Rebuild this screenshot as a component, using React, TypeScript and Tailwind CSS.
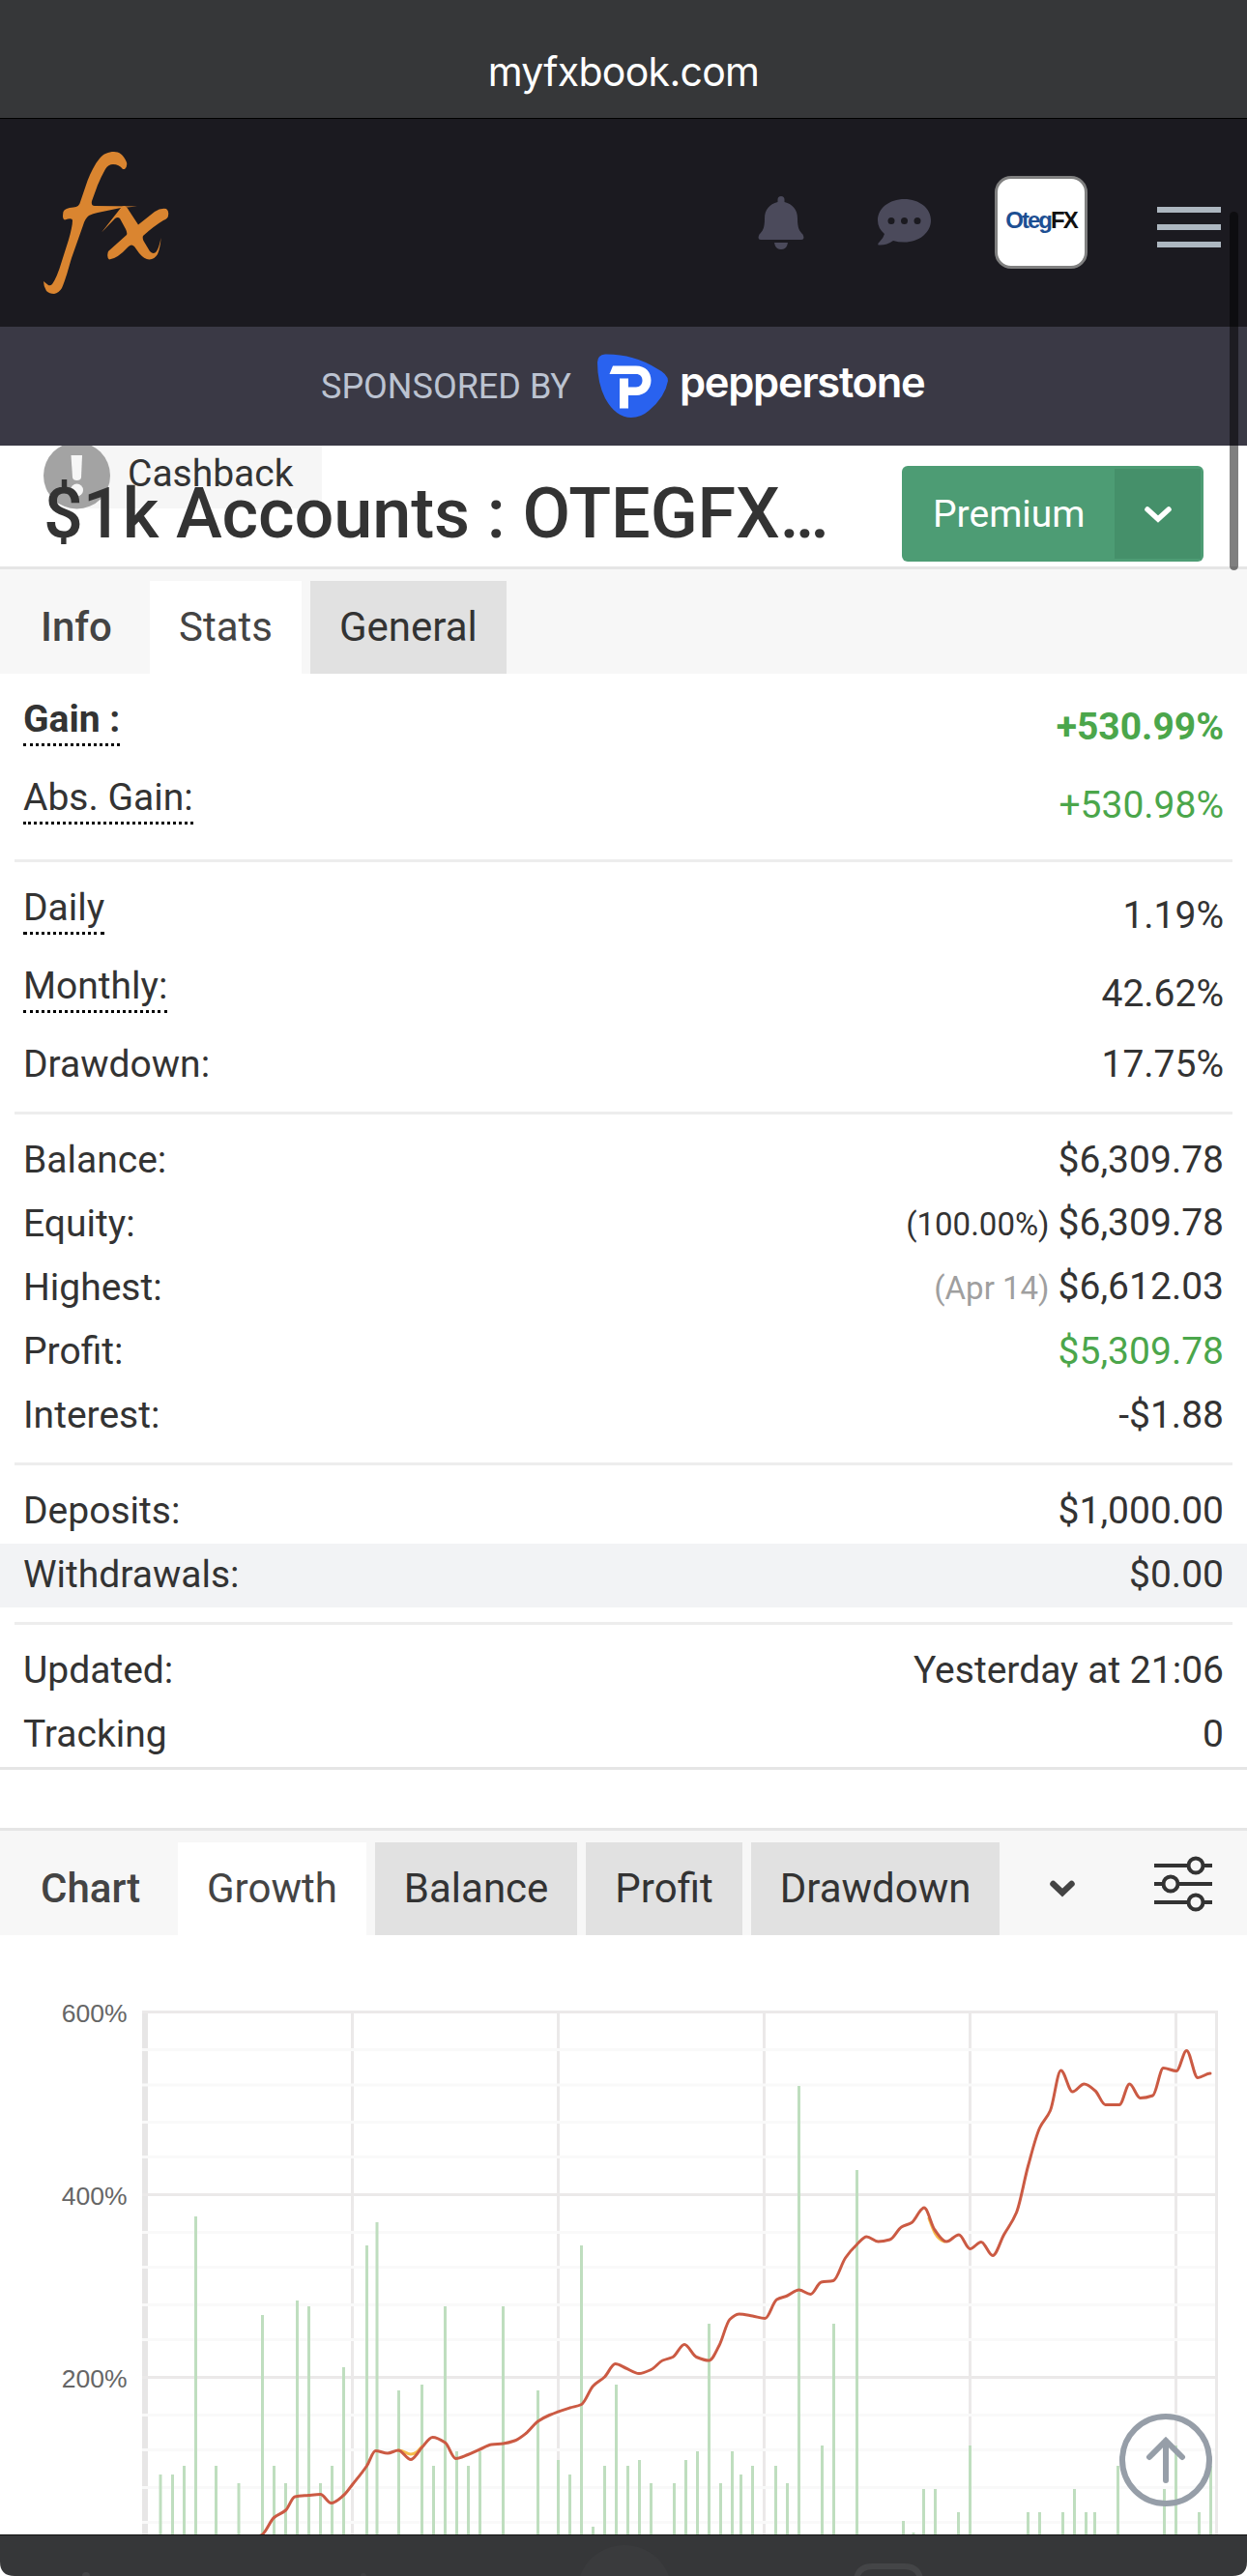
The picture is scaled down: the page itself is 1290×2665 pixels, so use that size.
import type { ReactNode } from 'react'

type Row = {
  label: string
  value: string
  note?: string
  noteClass?: string
  valueClass?: string
  bold?: boolean
  dotted?: boolean
  highlighted?: boolean
}

const STAT_GROUPS: Row[][] = [
  [
    { label: 'Gain :', value: '+530.99%', valueClass: 'text-[#4ba64b]', bold: true, dotted: true },
    { label: 'Abs. Gain:', value: '+530.98%', valueClass: 'text-[#4ba64b]', dotted: true }
  ],
  [
    { label: 'Daily', value: '1.19%', dotted: true },
    { label: 'Monthly:', value: '42.62%', dotted: true },
    { label: 'Drawdown:', value: '17.75%' }
  ],
  [
    { label: 'Balance:', value: '$6,309.78' },
    { label: 'Equity:', value: '$6,309.78', note: '(100.00%)' },
    { label: 'Highest:', value: '$6,612.03', note: '(Apr 14)', noteClass: 'text-[#9f9f9f]' },
    { label: 'Profit:', value: '$5,309.78', valueClass: 'text-[#4ba64b]' },
    { label: 'Interest:', value: '-$1.88' }
  ],
  [
    { label: 'Deposits:', value: '$1,000.00' },
    { label: 'Withdrawals:', value: '$0.00', highlighted: true }
  ],
  [
    { label: 'Updated:', value: 'Yesterday at 21:06' },
    { label: 'Tracking', value: '0' }
  ]
]

// [x, top] of every daily bar
const BARS = [
  [166, 520], [178.5, 520], [190.5, 511], [202.5, 253], [223.5, 511], [247, 529], [271.5, 355],
  [283.5, 511], [295.5, 529], [307.5, 340], [319.5, 346], [331.5, 529], [343.5, 511], [355.5, 409],
  [379.5, 283], [390, 259], [412.5, 433], [436.5, 427], [448.5, 511], [460.5, 346], [472.5, 496],
  [484.5, 511], [496.5, 496], [520.5, 346], [556.5, 433], [577.5, 505], [589.5, 520], [601.5, 283],
  [613.5, 574], [625.5, 511], [637.5, 427], [649.5, 511], [661.5, 505], [673.5, 529], [697.5, 529],
  [709.5, 505], [721.5, 496], [733.5, 364], [745.5, 529], [757.5, 496], [766.5, 520], [778.5, 511],
  [802.5, 511], [814.5, 529], [826.5, 118], [850.5, 490], [862.5, 364], [886.5, 205], [934.5, 568],
  [945, 580], [955.5, 535], [967.5, 535], [991.5, 559], [1003.5, 490], [1063.5, 559],
  [1075.5, 559], [1099.5, 559], [1111.5, 535], [1123.5, 559], [1132.5, 559], [1156.5, 511],
  [1204.5, 535], [1216.5, 490], [1240.5, 559], [1252.5, 511]
]

const GROWTH = [
  [269.5, 583], [283.5, 564.5], [295.5, 557], [305, 543], [319, 541.5], [331.5, 540.5],
  [342.5, 549.5], [356, 541], [364.5, 530.5], [379.5, 511], [388.5, 495.5], [401, 498],
  [412, 495], [425, 504.5], [436.5, 492], [447.5, 481.5], [460.5, 487], [471.5, 503.5],
  [484, 499.5], [496.5, 494], [508.5, 489], [520.5, 488], [532.5, 485], [544, 477.5],
  [556.5, 465], [568.5, 458.5], [589.5, 451], [601.5, 447.5], [613.5, 428.5], [625.5, 419],
  [636.5, 405.5], [647.5, 410], [661, 415.5], [673.5, 411.5], [685.5, 402], [696, 398.5],
  [708, 385.5], [720.5, 398.5], [733.5, 402], [744, 386.5], [755, 359.5], [764.5, 354],
  [778.5, 356], [791.5, 358.5], [803.5, 339], [814.5, 335], [826.5, 329], [838.5, 333.5],
  [849.5, 321], [862, 319.5], [874.5, 296], [886.5, 282], [896.5, 274], [908.5, 279],
  [920.5, 277], [932.5, 264], [943, 259.5], [956, 244], [967, 267], [979, 279], [992, 272],
  [1003.5, 286.5], [1015, 279.5], [1027, 293.5], [1038.5, 272], [1051.5, 249], [1063.5, 201],
  [1075.5, 161.5], [1086.5, 143.5], [1097.5, 102], [1109.5, 124], [1121.5, 116], [1133, 123],
  [1143.5, 137.5], [1158, 137.5], [1168.5, 116], [1179.5, 130.5], [1192.5, 128],
  [1203.5, 99.5], [1217, 102.5], [1227.5, 81.5], [1239, 109.5], [1252, 105]
]

const MINOR_LINES = [80.5, 117, 155.5, 191.5, 269.5, 305.5, 344.5, 380.5, 458.5, 494.5, 533.5, 569.5]
const MAJOR_LINES = [
  { y: 41.5, label: '600%' },
  { y: 230.5, label: '400%' },
  { y: 419.5, label: '200%' }
]
const VERTICAL_LINES = [364.5, 577.5, 790.5, 1003.5, 1216.5, 1258.5]

// Smooth line whose tangent is flat at every local peak and trough
function splinePath(points: number[][]) {
  const slope = points.map(([x, y], i) => {
    if (i === 0 || i === points.length - 1) return 0
    const [px, py] = points[i - 1]
    const [nx, ny] = points[i + 1]
    const before = (y - py) / (x - px)
    const after = (ny - y) / (nx - x)
    return before * after <= 0 ? 0 : (2 * before * after) / (before + after)
  })
  return points.reduce((d, [x, y], i) => {
    if (i === 0) return `M${x} ${y}`
    const [px, py] = points[i - 1]
    const third = (x - px) / 3
    return `${d}C${px + third} ${py + slope[i - 1] * third} ${x - third} ${y - slope[i] * third} ${x} ${y}`
  }, '')
}

function FxLogo() {
  return (
    <svg width="130" height="148" viewBox="0 0 130 148" fill="#da8530" aria-label="fx">
      <path d="M84 18Q87 15 86 11C83 3 78 0 73 0C67 0 62 2 58 7C53 13 49 21 45.5 30L38 52Q37 57 31 57.500Q22 58 20.500 62Q19 70 22 70.500Q30 68 30 71Q30 77 26 91L19 113Q14 130 9 137Q7 139 5 138L0 134Q0 139 3 144Q6 147 11 147Q16 146 19 141C23 132 26 120 29 110L41 76Q43 69 47 66Q51 64 56 63L80 58L97 56.500L53 56Q49 56 50 51L56 34.500Q60 25 64 18Q67 13 72 13Q78 13 82 18Z" />
      <path d="M60 83.500L80 58Q84 53 88.500 61L98 75.500L115 62Q121 58 127 59Q130 61 129 66Q129 69 124 71Q114 77 103 87Q102 90 104 93L110 103Q114 107 117 103Q120 98 121.500 89Q121 99 118 106Q115 111 109.500 111.500Q104 111 99 105L94 98Q91 95 88 98Q76 111 68 111.500Q65 109 67 103L86 86Q87 84 85 80L79 69Q77 67 74 69Z" />
    </svg>
  )
}

function PepperstoneMark() {
  return (
    <svg width="74" height="67" viewBox="0 0 74 67" aria-hidden="true">
      <path
        fill="#2962ef"
        d="M1 9Q1 1 9 .5Q38 0 62 15Q74 21 74 28Q71 45 54 59Q46 66 36 66Q20 66 9 46Q1 30 1 9Z"
      />
      <path
        fill="#fff"
        d="M17 12.500H41C51 12.500 56.500 19 56.500 27.500C56.500 36.500 50 43 41 43H33V56.500H24V25.500H33V34.500H41C45 34.500 47.500 31.500 47.500 27.500S45 21 41 21H13.500Z"
      />
    </svg>
  )
}

function Tab({ active, children }: { active?: boolean; children: ReactNode }) {
  return (
    <button
      className={`h-24 px-[30px] text-[42px] leading-[96px] whitespace-nowrap ${
        active ? 'bg-white text-[#444]' : 'bg-[#e1e1e1] text-[#333]'
      }`}
    >
      {children}
    </button>
  )
}

function StatRow({ row }: { row: Row }) {
  return (
    <div
      className={`flex justify-between px-6 ${row.dotted ? 'h-[81px]' : 'h-[66px]'} ${
        row.highlighted ? 'bg-[#f2f3f5]' : ''
      } ${row.bold ? 'font-bold' : ''}`}
    >
      {row.dotted ? (
        <span className="self-start border-b-[3px] border-dotted border-black pt-[8px] leading-[49px]">
          {row.label}
        </span>
      ) : (
        <span className="leading-[64px]">{row.label}</span>
      )}
      <span className="flex items-baseline gap-[9px] self-center pb-[2px] leading-[64px]">
        {row.note && <span className={`text-[33px] ${row.noteClass ?? ''}`}>{row.note}</span>}
        <span className={row.valueClass}>{row.value}</span>
      </span>
    </div>
  )
}

function GrowthChart() {
  return (
    <svg width="1290" height="582" viewBox="0 0 1290 582" className="block">
      <g stroke="#ebe9e9" strokeWidth="3">
        {VERTICAL_LINES.map((x) => (
          <line key={x} x1={x} x2={x} y1="40" y2="582" />
        ))}
        <line x1="150" x2="150" y1="40" y2="582" stroke="#e7e6e6" strokeWidth="6" />
        {MAJOR_LINES.map(({ y }) => (
          <line key={y} x1="147" x2="1260" y1={y} y2={y} />
        ))}
      </g>
      <g stroke="#f9f9f9" strokeWidth="3">
        {MINOR_LINES.map((y) => (
          <line key={y} x1="147" x2="1257" y1={y} y2={y} />
        ))}
      </g>
      {MAJOR_LINES.map(({ y, label }) => (
        <text
          key={label}
          x="131.5"
          y={y + 10}
          textAnchor="end"
          fill="#666"
          className="font-['Liberation_Sans',sans-serif] text-[26.5px]"
        >
          {label}
        </text>
      ))}
      <g stroke="#bfdebf" strokeWidth="3">
        {BARS.map(([x, top]) => (
          <line key={x} x1={x} x2={x} y1={top} y2="582" />
        ))}
      </g>
      <g fill="none" strokeWidth="3" strokeLinecap="round" strokeLinejoin="round">
        <path d="M412 495C418 495 420 499 425 499S432 496 436.500 491M961 255C965 266 968 276 977 279" stroke="#f6bd4a" />
        <path d={splinePath(GROWTH)} stroke="#cb5a43" />
      </g>
    </svg>
  )
}

export default function App() {
  return (
    <div className="relative flex h-[2665px] w-[1290px] flex-col overflow-hidden bg-white font-['Roboto',sans-serif] text-[39px] text-[#333]">
      {/* Browser address bar */}
      <div className="h-[123px] border-b border-black bg-[#363739] pt-[48px] text-center font-['Inter',sans-serif] text-[41px] leading-[52px] tracking-[-0.7px] text-white">
        myfxbook.com
      </div>

      <header className="flex h-[215px] items-center bg-[#1b1a20] pl-[45px]">
        <FxLogo />
        <svg width="48" height="55" viewBox="0 0 48 55" fill="#4b4a5b" className="ml-[609px]">
          <path d="M20.500 5V3.500a3.500 3.500 0 0 1 7 0V6C36 8 41 14 41 23C41 33 43 36 46.500 39.500Q49 45 45 45H3Q-1 45 1.500 39.500C5 36 7 33 7 23C7 14 12 8 20.500 6ZM17 48H31Q30 55 24 55T17 48Z" />
        </svg>
        <svg width="55" height="49" viewBox="0 0 55 49" className="ml-[76px]">
          <path fill="#4b4a5b" d="M27.500 0C43 0 55 9.500 55 22S43 44.500 27.500 44.500Q21 44.500 16 43Q9 48 1 47.500Q-1 47 2 44Q6 40 7 36Q0 30 0 22C0 9.500 12 0 27.500 0Z" />
          <g fill="#1b1a20">
            <circle cx="14" cy="22.500" r="3.500" />
            <circle cx="27.500" cy="22.500" r="3.500" />
            <circle cx="41" cy="22.500" r="3.500" />
          </g>
        </svg>
        <div className="-mt-px ml-[66px] flex h-24 w-24 items-center justify-center rounded-[17px] border-[3px] border-[#808080] bg-white pb-[4px] font-['Liberation_Sans',sans-serif] text-[24px] font-bold tracking-[-2px] text-[#1d4f93]">
          Oteg<span className="text-[#111]">FX</span>
        </div>
        <div className="ml-[72px] flex flex-col gap-3 pt-[8px]">
          <span className="h-[6px] w-[66px] bg-[#adb7c0]" />
          <span className="h-[6px] w-[66px] bg-[#adb7c0]" />
          <span className="h-[6px] w-[66px] bg-[#adb7c0]" />
        </div>
      </header>

      <div className="flex h-[123px] items-center bg-[#3a3945] pl-[332px]">
        <span className="w-[285px] text-[36px] text-[#bcc3d1]">SPONSORED BY</span>
        <PepperstoneMark />
        <span className="-mt-[8px] ml-[12px] font-['Inter',sans-serif] text-[43.5px] font-semibold tracking-[-1.3px] text-white">
          pepperstone
        </span>
      </div>

      {/* Account title, with the cashback entry showing behind it */}
      <div className="relative flex h-[128px] justify-between overflow-hidden border-b-[3px] border-[#e5e5e5] pr-[45px] pl-[45px]">
        <div className="absolute top-0 left-[79px] h-[65px] w-[254px] bg-[#f6f6f6] pt-[8px] pl-[53px] leading-[42px]">
          Cashback
        </div>
        <svg width="70" height="70" viewBox="0 0 70 70" className="absolute -top-[4px] left-[45px]">
          <circle cx="34.500" cy="35" r="34.500" fill="#a3a3a3" />
          <path d="M28.500 14H40L39 37Q38.500 40 34.500 40T30 37Z" fill="#f6f6f6" />
          <circle cx="34.500" cy="50" r="6.500" fill="#f6f6f6" />
        </svg>
        <h1 className="relative pt-[29px] text-[72px] leading-[84px] font-medium tracking-[-0.1px] whitespace-nowrap">
          $1k Accounts : OTEGFX…
        </h1>
        <div className="relative mt-[21px] flex h-[99px] w-[312px] rounded-[6px] bg-[#4d9c74] p-[3px] text-white">
          <span className="w-[217px] pl-[29px] leading-[94px]">Premium</span>
          <span className="flex flex-1 items-center justify-center bg-[#45906a]">
            <svg width="30" height="18" viewBox="0 0 30 18" fill="none">
              <path d="M4 4L15 14L26 4" stroke="#fff" strokeWidth="5.500" strokeLinecap="round" />
            </svg>
          </span>
        </div>
      </div>

      <nav className="flex h-[108px] items-end gap-[9px] bg-[#f7f7f7] pl-[42px] text-[#444]">
        <h2 className="w-[104px] text-[42px] leading-[96px] font-medium">Info</h2>
        <Tab active>Stats</Tab>
        <Tab>General</Tab>
      </nav>

      <section className="flex flex-col border-b-[3px] border-[#e5e5e5] pt-[15px]">
        {STAT_GROUPS.map((group, index) => (
          <div key={group[0].label}>
            {index > 0 && <div className="mx-[15px] my-[15px] h-[3px] bg-[#ededed]" />}
            {group.map((row) => (
              <StatRow key={row.label} row={row} />
            ))}
          </div>
        ))}
      </section>

      <nav className="mt-[60px] flex h-[111px] items-end gap-[9px] border-t-[3px] border-[#e5e5e5] bg-[#f7f7f7] pl-[42px] text-[#444]">
        <h2 className="w-[133px] text-[42px] leading-[96px] font-medium">Chart</h2>
        <Tab active>Growth</Tab>
        <Tab>Balance</Tab>
        <Tab>Profit</Tab>
        <Tab>Drawdown</Tab>
        <div className="ml-auto flex h-24 items-center gap-[81px] pr-9">
          <svg width="28" height="18" viewBox="0 0 28 18" fill="none">
            <path d="M4.500 4L14 13L23.500 4" stroke="#444" strokeWidth="6.500" strokeLinecap="round" />
          </svg>
          <svg width="60" height="58" viewBox="0 0 60 58" className="-mt-[10px]" fill="#f7f7f7" stroke="#333" strokeWidth="4">
            <path d="M0 10H60M0 29H60M0 48H60" />
            <circle cx="43" cy="10" r="7.500" />
            <circle cx="17" cy="29" r="7.500" />
            <circle cx="43" cy="48" r="7.500" />
          </svg>
        </div>
      </nav>

      <div className="pt-[38px]">
        <GrowthChart />
      </div>

      {/* Browser toolbar */}
      <div className="flex-1 bg-white">
        <svg width="1290" height="43" viewBox="0 0 1290 43" className="block">
          <path d="M0 0H1290V28Q1290 43 1275 43H15Q0 43 0 28Z" fill="#363739" />
          <path d="M0 .5H1290" stroke="#111" />
          <circle cx="646" cy="60" r="49" fill="#3a3b3d" />
          <circle cx="89" cy="43" r="4" fill="#444547" />
          <circle cx="376" cy="43" r="3" fill="#3d3e40" />
          <path d="M886 46Q888 33 903 33H935Q950 33 952 46" fill="none" stroke="#444547" strokeWidth="6" />
        </svg>
      </div>

      <svg width="96" height="96" viewBox="0 0 96 96" fill="none" stroke="#969ea8" strokeWidth="6" strokeLinecap="round" className="absolute top-[2497px] left-[1158px]">
        <circle cx="48" cy="48" r="45" />
        <path d="M48 69V28M31 45L48 28L65 45" />
      </svg>
      <div className="absolute top-[219px] left-[1272px] h-[371px] w-[9px] rounded-full bg-black/50" />
    </div>
  )
}
